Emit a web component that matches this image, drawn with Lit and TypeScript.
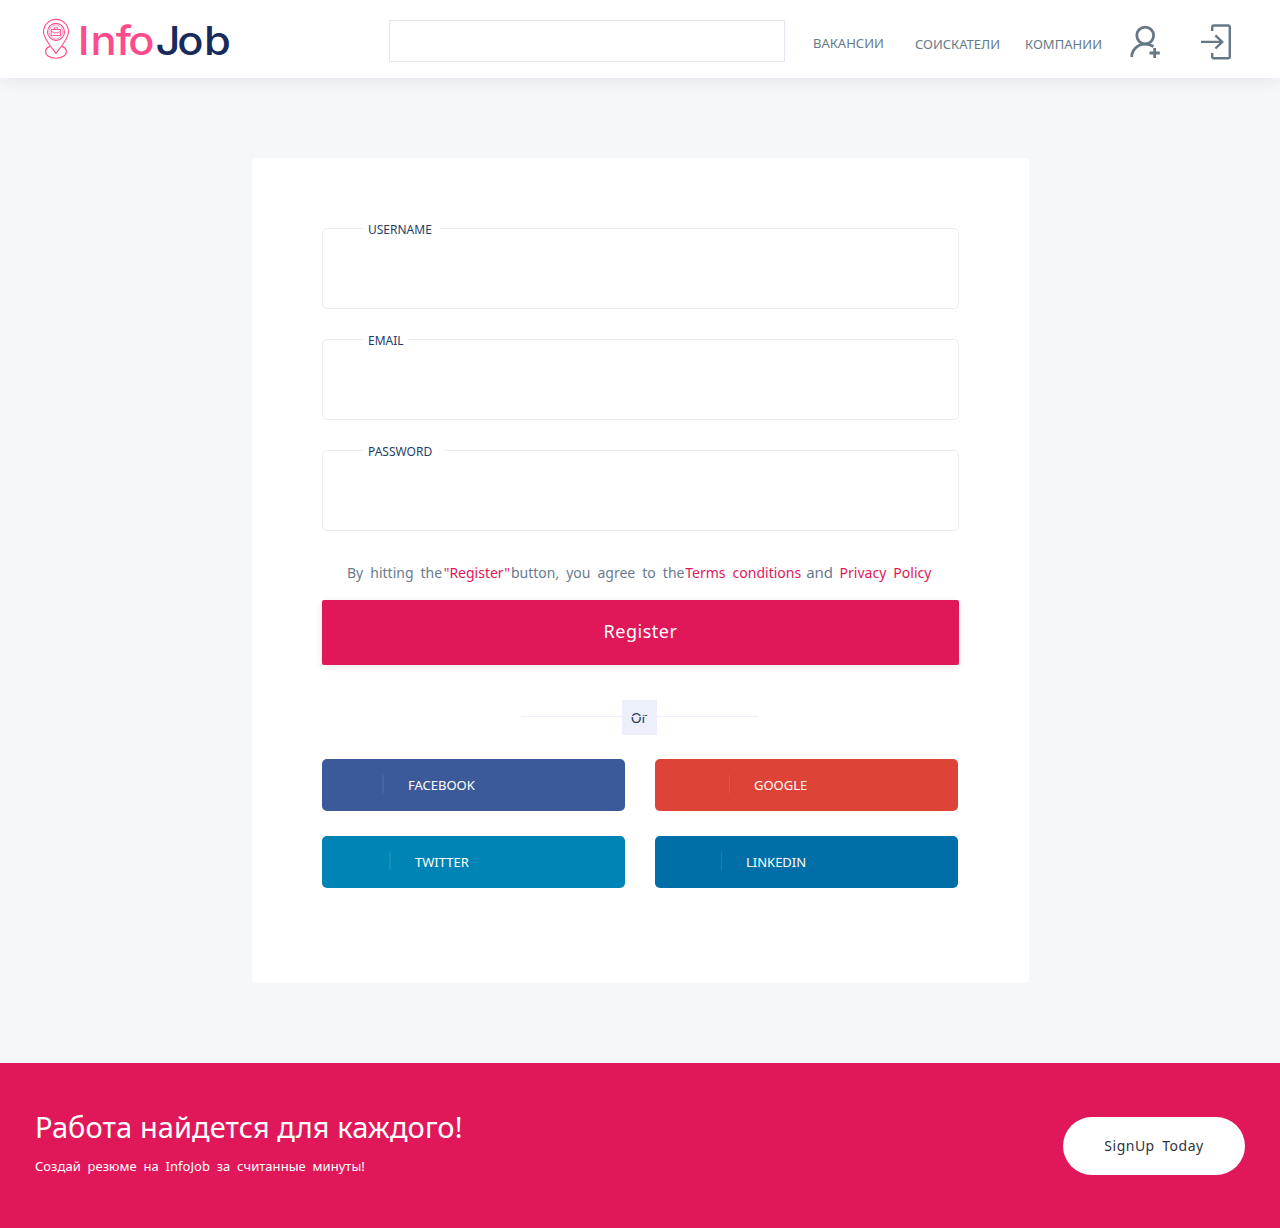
import { LitElement, html, css, svg } from "lit";
import { customElement } from "lit/decorators.js";

const pin = svg`
  <g fill="none" stroke="#ff4b8b" stroke-width="1.1" stroke-linecap="round" stroke-linejoin="round">
    <path d="M14 35.500 C10.500 30.500 1.500 20.500 1.500 13.900 A12.500 12.500 0 0 1 26.500 13.900 C26.500 20.500 17.500 30.500 14 35.500 Z"/>
    <circle cx="14" cy="13.900" r="8.500"/>
    <circle cx="14" cy="13.900" r="7" stroke-width=".5"/>
    <path d="M7.500 28.600 C2.800 30 2.500 35.500 6 38 C10 41 18 41 22 38 C25.500 35.500 25.200 30 20.500 28.600"/>
    <path stroke-width=".9" d="M9.500 11.500 h9 v6 h-9 z M9.500 13.500 l3.500 1.300 h2 l3.500 -1.300 M12.200 11.200 v-1.500 h3.600 v1.500"/>
  </g>`;

@customElement("app-root")
export class AppRoot extends LitElement {
  static styles = css`
    :host {
      display: block;
      font-family: "Noto Sans", sans-serif;
      color: #6b7c8f;
    }
    * { box-sizing: border-box; }
    .page { height: 1228px; background: #f5f7f9; display: flex; flex-direction: column; overflow: hidden; }
    header {
      height: 78px; flex: none; background: #fff; display: flex; align-items: flex-start;
      box-shadow: 0 1px 18px rgba(50, 20, 110, .09);
    }
    .logo { display: block; margin: 18px 0 0 42px; width: 200px; height: 50px; overflow: visible; }
    .search {
      width: 396px; height: 42px; margin: 20px 0 0 147px; padding: 0 12px;
      border: 1px solid #e3e8f0; background: #fff; border-radius: 0; outline: none;
    }
    nav { display: flex; margin-left: 28px; font-size: 13px; line-height: 18px; color: #667a88; white-space: nowrap; }
    .n1 { width: 102px; margin-top: 34px; }
    .n2 { width: 110px; margin-top: 35px; }
    .n3 { width: 105px; margin-top: 35px; letter-spacing: .05px; }
    .user { display: block; margin-top: 25px; width: 32px; height: 34px; }
    .login { display: block; margin: 24px 0 0 39px; width: 32px; height: 36px; }
    main { flex: none; width: 777px; height: 825px; margin: 80px 0 80px 252px; background: #fff; border-radius: 4px; padding: 70px; }
    .field { position: relative; height: 81px; margin-bottom: 30px; }
    .field input { display: block; width: 100%; height: 100%; border: 1px solid #ececee; border-radius: 5px; background: #fff; outline: none; padding: 0 40px; }
    .field label {
      position: absolute; left: 41px; top: -8px; padding-left: 5px; background: #fff;
      font-size: 12px; line-height: 20px; color: #263d64;
    }
    .username { width: 77px; }
    .email { width: 46px; }
    .password { width: 81px; }
    .terms { display: flex; margin: 32px 0 17px 25px; font-size: 14px; line-height: 20px; word-spacing: 3.4px; white-space: pre; color: #6a7a8e; }
    .pink { color: #e0185a; }
    .reg { margin: 0 1px 0 1.5px; }
    .agree { margin-right: .8px; }
    .and { font-size: 15px; line-height: 19px; height: 20px; margin: 0 6.5px 0 5px; }
    .register {
      display: block; width: 637px; height: 65px; border: 0; border-radius: 2px; background: #e0185a; color: #fff;
      font: 18px/62px "Noto Sans", sans-serif; letter-spacing: .5px; padding: 0 0 3px; box-shadow: 0 2px 8px rgba(0, 0, 0, .09);
    }
    .divider { position: relative; width: 238px; height: 35px; margin: 35px 0 24px 198px; display: flex; justify-content: center; }
    .or { width: 35px; height: 35px; background: #ecf0fa; color: #263d64; font-size: 14px; line-height: 36px; text-align: center; }
    .line { position: absolute; left: 1px; right: 0; top: 16px; height: 1px; background: #efeefb; }
    .social { display: grid; grid-template-columns: 303px 303px; gap: 25px 30px; }
    .btn { height: 52px; border-radius: 5px; color: #fff; font-size: 13px; line-height: 52px; display: flex; }
    .btn::before { content: ""; width: 1px; height: 18px; margin: 16px 24px 0 0; background: rgba(255, 255, 255, .11); }
    .fb { background: #3c5a99; padding-left: 60px; }
    .tw { background: #0084b6; padding-left: 67px; }
    .fb::before, .tw::before { width: 2px; background: rgba(255, 255, 255, .07); }
    .gg { background: #dd4337; padding-left: 74px; }
    .li { background: #006fa8; padding-left: 66px; }
    footer { flex: none; height: 165px; background: #e0185a; color: #fff; display: flex; justify-content: space-between; padding: 0 35px; }
    h2 { margin: 43px 0 0; font-size: 29px; line-height: 42px; font-weight: 400; letter-spacing: .08px; }
    p { margin: 9px 0 0; font-size: 13px; line-height: 18px; letter-spacing: .04px; word-spacing: 3.3px; }
    .signup {
      width: 182px; height: 58px; margin-top: 54px; border: 0; border-radius: 29px; background: #fff; color: #2f3440; padding: 0;
      font: 14px/58px "Noto Sans", sans-serif; letter-spacing: .5px; word-spacing: 3.4px;
    }
  `;

  render() {
    return html`
      <div class="page">
        <header>
          <svg class="logo" viewBox="0 0 200 50">
            ${pin}
            <g font-family="Inter, sans-serif" font-weight="500" font-size="39.500" transform="scale(1.1 1)">
              <text x="32.500 44 67.100 78.400" y="36.700" fill="#ff4b8b">Info</text>
              <text x="103.100 122.900 147.200" y="36.700" fill="#172b5c">Job</text>
            </g>
          </svg>
          <input class="search" type="text" />
          <nav>
            <span class="n1">ВАКАНСИИ</span>
            <span class="n2">СОИСКАТЕЛИ</span>
            <span class="n3">КОМПАНИИ</span>
          </nav>
          <svg class="user" viewBox="0 0 32 34" fill="none" stroke="#657885" stroke-width="2.800">
            <circle cx="15.200" cy="10.500" r="8.400" />
            <path d="M1.700 32 C1.800 24.500 8 19.200 15.200 19.200 C18.400 19.200 20.900 19.900 23.500 21.500" />
            <path d="M24.700 23 v10 M19.500 28 h10.300" />
          </svg>
          <svg class="login" viewBox="0 0 32 36" fill="none" stroke="#657885" stroke-width="2.400">
            <path d="M11.200 7 V3.200 Q11.200 1.500 12.900 1.500 H27.100 Q28.800 1.500 28.800 3.200 V32.500 Q28.800 34.200 27.100 34.200 H12.900 Q11.200 34.200 11.200 32.500 V29" />
            <path d="M0 17.900 H21 M14.400 11.400 L21.200 17.900 L14.400 24.500" />
          </svg>
        </header>
        <main>
          ${["username", "email", "password"].map(
            (n) => html`<div class="field">
              <input id=${n} type=${n === "password" ? "password" : "text"} /><label class=${n} for=${n}>${n.toUpperCase()}</label>
            </div>`
          )}
          <div class="terms"><span>By hitting the</span><span class="pink reg">"Register"</span><span class="agree">button, you agree to the</span><span class="pink">Terms conditions</span><span class="and">and</span><span class="pink">Privacy Policy</span></div>
          <button class="register">Register</button>
          <div class="divider"><span class="or">Or</span><span class="line"></span></div>
          <div class="social">
            <a class="btn fb">FACEBOOK</a>
            <a class="btn gg">GOOGLE</a>
            <a class="btn tw">TWITTER</a>
            <a class="btn li">LINKEDIN</a>
          </div>
        </main>
        <footer>
          <div>
            <h2>Работа найдется для каждого!</h2>
            <p>Создай резюме на InfoJob за считанные минуты!</p>
          </div>
          <button class="signup">SignUp Today</button>
        </footer>
      </div>
    `;
  }
}
